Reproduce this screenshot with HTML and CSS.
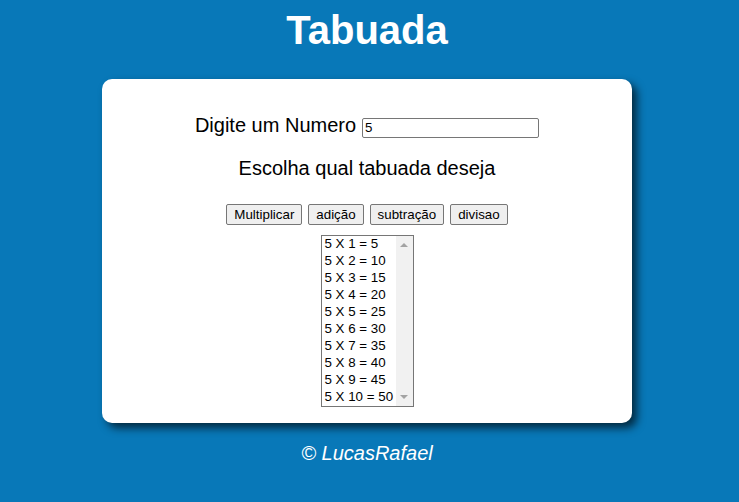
FILE: index.html
```html
<!DOCTYPE html>
<html lang="pt">
<head>
<meta charset="utf-8">
<title>Tabuada</title>
<link rel="stylesheet" href="styles.css">
</head>
<body>
<div class="page">
  <h1 class="title">Tabuada</h1>
  <main class="card">
    <div class="row-number">
      <label for="num">Digite um Numero</label>
      <input id="num" class="num-input" type="text" value="5">
    </div>
    <p class="choose">Escolha qual tabuada deseja</p>
    <div class="buttons">
      <button class="btn">Multiplicar</button>
      <button class="btn">adição</button>
      <button class="btn">subtração</button>
      <button class="btn">divisao</button>
    </div>
    <div class="listbox">
      <ul class="options">
        <li>5 X 1 = 5</li>
        <li>5 X 2 = 10</li>
        <li>5 X 3 = 15</li>
        <li>5 X 4 = 20</li>
        <li>5 X 5 = 25</li>
        <li>5 X 6 = 30</li>
        <li>5 X 7 = 35</li>
        <li>5 X 8 = 40</li>
        <li>5 X 9 = 45</li>
        <li>5 X 10 = 50</li>
      </ul>
      <div class="scrollbar">
        <span class="arrow arrow-up"></span>
        <span class="arrow arrow-down"></span>
      </div>
    </div>
  </main>
  <footer class="footer">© LucasRafael</footer>
</div>
</body>
</html>
```

FILE: styles.css
```css
html, body {
  margin: 0;
  padding: 0;
  background: #0878b8;
  height: 100%;
}
body {
  font-family: "Liberation Sans", Arial, sans-serif;
  color: #000;
}
.page {
  width: 734px;
  padding-top: 8px;
  display: flex;
  flex-direction: column;
  align-items: center;
}
.title {
  margin: 0;
  font-size: 40px;
  line-height: 45px;
  font-weight: bold;
  color: #fff;
}
.card {
  margin-top: 26px;
  width: 530px;
  height: 344px;
  box-sizing: border-box;
  background: #fff;
  border-radius: 10px;
  box-shadow: 5px 5px 8px rgba(0, 0, 0, 0.65);
  padding-top: 35px;
  display: flex;
  flex-direction: column;
  align-items: center;
}
.row-number {
  display: flex;
  align-items: baseline;
  gap: 6px;
  font-size: 20px;
  line-height: 23px;
  height: 24px;
}
.num-input {
  width: 177px;
  height: 20px;
  box-sizing: border-box;
  font-family: "Liberation Sans", Arial, sans-serif;
  font-size: 13.33px;
  padding: 1px 2px;
  border: 1px solid #767676;
  border-radius: 2px;
  margin: 0;
}
.choose {
  margin: 19px 0 0;
  font-size: 20px;
  line-height: 23px;
}
.buttons {
  margin-top: 24px;
  display: flex;
  gap: 6px;
}
.btn {
  font-family: "Liberation Sans", Arial, sans-serif;
  font-size: 13.33px;
  height: 21px;
  padding: 1px 7px;
  margin: 0;
  background: #efefef;
  border: 1px solid #767676;
  border-radius: 2px;
  color: #000;
}
.listbox {
  margin-top: 10px;
  width: 93px;
  height: 172px;
  box-sizing: border-box;
  border: 1px solid #767676;
  display: flex;
  background: #fff;
}
.options {
  list-style: none;
  margin: 0;
  padding: 0;
  flex: 1;
  font-size: 13.33px;
  line-height: 16px;
}
.options li {
  padding: 0 0 1px 3px;
  white-space: nowrap;
}
.scrollbar {
  width: 17px;
  background: #f1f1f1;
  display: flex;
  flex-direction: column;
  justify-content: space-between;
  align-items: center;
  padding: 7px 0 7px;
}
.arrow {
  width: 0;
  height: 0;
  border-left: 4px solid transparent;
  border-right: 4px solid transparent;
}
.arrow-up {
  border-bottom: 4px solid #a3a3a3;
}
.arrow-down {
  border-top: 4px solid #a3a3a3;
}
.footer {
  margin-top: 19px;
  font-size: 20px;
  line-height: 23px;
  font-style: italic;
  color: #fff;
}
```
